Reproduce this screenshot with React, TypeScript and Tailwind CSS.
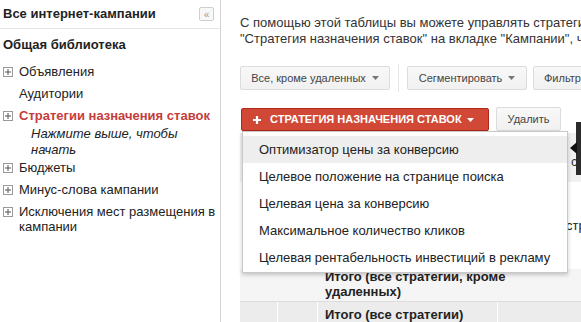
import React from "react";

const font = { fontFamily: '"Liberation Sans", Arial, sans-serif' };

function PlusBox() {
  return (
    <span className="mt-[3px] w-[10px] h-[10px] border border-[#9a9a9a] flex items-center justify-center shrink-0 bg-white">
      <svg width="6" height="6" viewBox="0 0 6 6">
        <path d="M3 0v6M0 3h6" stroke="#555" strokeWidth="1" />
      </svg>
    </span>
  );
}

function Caret({ color = "#777" }: { color?: string }) {
  return (
    <svg width="7" height="4" viewBox="0 0 7 4" className="shrink-0">
      <path d="M0 0h7L3.5 4z" fill={color} />
    </svg>
  );
}

const menuItems = [
  "Оптимизатор цены за конверсию",
  "Целевое положение на странице поиска",
  "Целевая цена за конверсию",
  "Максимальное количество кликов",
  "Целевая рентабельность инвестиций в рекламу",
];

export default function App() {
  return (
    <div className="w-[581px] h-[322px] overflow-hidden flex bg-white text-[#222]" style={font}>
      {/* Sidebar */}
      <aside className="w-[221px] shrink-0 border-r border-[#d4d4d4] text-[13px]">
        <div className="h-[29px] border-b border-[#e5e5e5] flex items-center justify-between pl-[3px] pr-[6px]">
          <span className="font-bold">Все интернет-кампании</span>
          <button className="w-[15px] h-[14px] border border-[#cfcfcf] rounded-[2px] bg-[#f8f8f8] text-[#999] text-[10px] leading-[11px] flex items-center justify-center">
            «
          </button>
        </div>
        <div className="pl-[3px] mt-[8px] leading-[16px] font-bold">Общая библиотека</div>
        <div className="mt-[8px] leading-[16px]">
          <div className="flex gap-[6px] pl-[3px] py-[3px]">
            <PlusBox />
            <span>Объявления</span>
          </div>
          <div className="pl-[19px] py-[3px]">Аудитории</div>
          <div className="flex gap-[6px] pl-[3px] py-[3px]">
            <PlusBox />
            <span className="font-bold text-[#c53d3a]">Стратегии назначения ставок</span>
          </div>
          <div className="pl-[31px] -mt-[1px] italic whitespace-nowrap">
            Нажмите выше, чтобы
            <br />
            начать
          </div>
          <div className="flex gap-[6px] pl-[3px] py-[3px] -mt-[1px]">
            <PlusBox />
            <span>Бюджеты</span>
          </div>
          <div className="flex gap-[6px] pl-[3px] py-[3px]">
            <PlusBox />
            <span>Минус-слова кампании</span>
          </div>
          <div className="flex gap-[6px] pl-[3px] py-[3px] leading-[15px]">
            <PlusBox />
            <span className="whitespace-nowrap">
              Исключения мест размещения в
              <br />
              кампании
            </span>
          </div>
        </div>
      </aside>

      {/* Main */}
      <main className="flex-1 relative overflow-hidden pl-[19px]">
        <p className="mt-[15px] text-[13px] leading-[16px] text-[#333] whitespace-nowrap">
          С помощью этой таблицы вы можете управлять стратегиями назначения ставок для кампаний.
          <br />
          "Стратегия назначения ставок" на вкладке "Кампании", чтобы применить ее.
        </p>

        <div className="mt-[17px] h-[28px] flex items-center text-[11px] text-[#444] whitespace-nowrap">
          <button className="w-[150px] h-[24px] shrink-0 flex items-center justify-center gap-[6px] border border-[#dcdcdc] rounded-[2px] bg-gradient-to-b from-[#f8f8f8] to-[#f1f1f1]">
            Все, кроме удаленных <Caret />
          </button>
          <div className="w-px h-[28px] bg-[#e5e5e5] mx-[8px] shrink-0" />
          <button className="w-[120px] h-[24px] shrink-0 flex items-center justify-center gap-[6px] border border-[#dcdcdc] rounded-[2px] bg-gradient-to-b from-[#f8f8f8] to-[#f1f1f1]">
            Сегментировать <Caret />
          </button>
          <button className="ml-[6px] w-[90px] h-[24px] shrink-0 flex items-center pl-[10px] gap-[6px] border border-[#dcdcdc] rounded-[2px] bg-gradient-to-b from-[#f8f8f8] to-[#f1f1f1]">
            Фильтр <Caret />
          </button>
        </div>

        <div className="mt-[16px] h-[23px] flex items-start whitespace-nowrap">
          <button className="ml-[1px] w-[248px] h-[23px] shrink-0 flex items-center pl-[11px] gap-[8px] bg-[#d14836] border border-[#b0281a] rounded-[2px] text-white text-[11px] font-bold">
            <svg width="8" height="8" viewBox="0 0 8 8" className="shrink-0">
              <path d="M4 0v8M0 4h8" stroke="#fff" strokeWidth="2.2" />
            </svg>
            <span className="ml-[1px]">СТРАТЕГИЯ НАЗНАЧЕНИЯ СТАВОК</span>
            <span className="-ml-[3px]">
              <Caret color="#fff" />
            </span>
          </button>
          <button className="ml-[7px] -mt-[1px] w-[65px] h-[24px] shrink-0 flex items-center justify-center border border-[#dcdcdc] rounded-[2px] bg-gradient-to-b from-[#f8f8f8] to-[#f1f1f1] text-[11px] text-[#444]">
            Удалить
          </button>
        </div>

        {/* Table behind the menu */}
        <div className="mt-[2px] w-[600px] text-[13px] text-[#222] whitespace-nowrap">
          <div className="h-[49px] bg-[#f1f1f1] flex items-center pl-[331px] text-[#333]">
            <span className="mt-[8px]">с</span>
          </div>
          <div className="h-[87px] flex items-center pl-[326px]">стратегия</div>
          <div className="bg-[#f5f5f5] leading-[15px] pb-[2px] flex border-b border-[#dddddd]">
            <div className="w-[38px]" />
            <div className="w-[40px]" />
            <div className="w-[180px] pl-[7px] font-bold">
              Итого (все стратегии, кроме
              <br />
              удаленных)
            </div>
          </div>
          <div className="bg-[#ececec] leading-[15px] flex">
            <div className="w-[38px] border-r border-white h-[40px]" />
            <div className="w-[40px] border-r border-white" />
            <div className="w-[180px] pl-[7px] pt-[5px] font-bold border-r border-white">
              Итого (все стратегии)
            </div>
            <div className="flex-1" />
          </div>
        </div>

        {/* Tooltip peeking at the edge */}
        <div className="absolute left-[355px] top-[122px] w-[30px] h-[53px] bg-[#2b2b2b]" />
        <svg width="7" height="12" viewBox="0 0 7 12" className="absolute left-[349px] top-[142px]">
          <path d="M7 0v12L0 6z" fill="#111" />
        </svg>

        {/* Dropdown menu */}
        <div className="absolute left-[21px] top-[131px] w-[326px] bg-white border border-[#c8c8c8] shadow-[0_2px_4px_rgba(0,0,0,0.2)] pt-[4px] pb-[1px] text-[13px] text-[#222] whitespace-nowrap">
          {menuItems.map((item, i) => (
            <div
              key={item}
              className={
                i === 0
                  ? "h-[27px] flex items-center pl-[16px] bg-[#eeeeee]"
                  : "h-[27px] flex items-center pl-[16px]"
              }
            >
              {item}
            </div>
          ))}
        </div>
      </main>
    </div>
  );
}
